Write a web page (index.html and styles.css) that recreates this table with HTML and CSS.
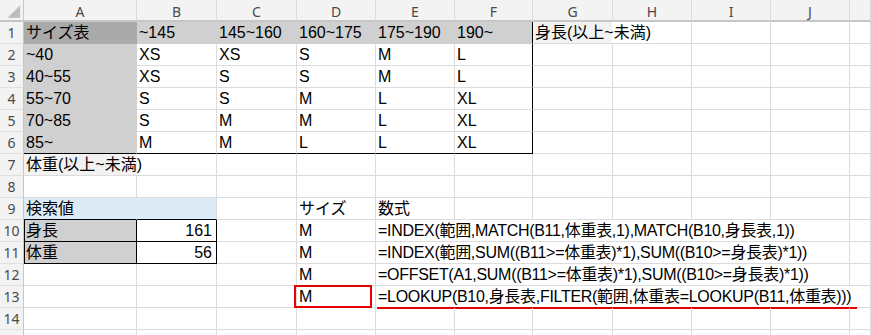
FILE: index.html
```html
<!DOCTYPE html>
<html lang="ja">
<head>
<meta charset="utf-8">
<title>サイズ表</title>
<link rel="stylesheet" href="styles.css">
</head>
<body>
<div class="sheet">
  <!-- header -->
  <div class="corner"><svg width="24" height="20" viewBox="0 0 24 20"><polygon points="21,5 21,18 8,18" fill="#bdbdbd"/></svg></div>
  <div class="ch">A</div><div class="ch">B</div><div class="ch">C</div><div class="ch">D</div><div class="ch">E</div><div class="ch">F</div><div class="ch">G</div><div class="ch">H</div><div class="ch">I</div><div class="ch">J</div><div class="ch"></div>

  <!-- row 1 -->
  <div class="rh">1</div>
  <div class="c fd">サイズ表</div>
  <div class="c f">~145</div>
  <div class="c f">145~160</div>
  <div class="c f">160~175</div>
  <div class="c f">175~190</div>
  <div class="c f rbk">190~</div>
  <div class="c s2 g1">身長(以上~未満)</div>
  <div class="c"></div><div class="c"></div><div class="c"></div>

  <!-- row 2 -->
  <div class="rh">2</div>
  <div class="c f">~40</div>
  <div class="c">XS</div><div class="c">XS</div><div class="c">S</div><div class="c">M</div><div class="c rbk">L</div>
  <div class="c"></div><div class="c"></div><div class="c"></div><div class="c"></div><div class="c"></div>

  <!-- row 3 -->
  <div class="rh">3</div>
  <div class="c f">40~55</div>
  <div class="c">XS</div><div class="c">S</div><div class="c">S</div><div class="c">M</div><div class="c rbk">L</div>
  <div class="c"></div><div class="c"></div><div class="c"></div><div class="c"></div><div class="c"></div>

  <!-- row 4 -->
  <div class="rh">4</div>
  <div class="c f">55~70</div>
  <div class="c">S</div><div class="c">S</div><div class="c">M</div><div class="c">L</div><div class="c rbk">XL</div>
  <div class="c"></div><div class="c"></div><div class="c"></div><div class="c"></div><div class="c"></div>

  <!-- row 5 -->
  <div class="rh">5</div>
  <div class="c f">70~85</div>
  <div class="c">S</div><div class="c">M</div><div class="c">M</div><div class="c">L</div><div class="c rbk">XL</div>
  <div class="c"></div><div class="c"></div><div class="c"></div><div class="c"></div><div class="c"></div>

  <!-- row 6 -->
  <div class="rh">6</div>
  <div class="c f bbk">85~</div>
  <div class="c bbk">M</div><div class="c bbk">M</div><div class="c bbk">L</div><div class="c bbk">L</div><div class="c bbk rbk">XL</div>
  <div class="c"></div><div class="c"></div><div class="c"></div><div class="c"></div><div class="c"></div>

  <!-- row 7 -->
  <div class="rh">7</div>
  <div class="c s2 a7">体重(以上~未満)</div>
  <div class="c"></div><div class="c"></div><div class="c"></div><div class="c"></div><div class="c"></div><div class="c"></div><div class="c"></div><div class="c"></div><div class="c"></div>

  <!-- row 8 -->
  <div class="rh">8</div>
  <div class="c"></div><div class="c"></div><div class="c"></div><div class="c"></div><div class="c"></div><div class="c"></div><div class="c"></div><div class="c"></div><div class="c"></div><div class="c"></div><div class="c"></div>

  <!-- row 9 -->
  <div class="rh">9</div>
  <div class="c blue">検索値</div>
  <div class="c blue b9"></div>
  <div class="c"></div>
  <div class="c">サイズ</div>
  <div class="c">数式</div>
  <div class="c"></div><div class="c"></div><div class="c"></div><div class="c"></div><div class="c"></div><div class="c"></div>

  <!-- row 10 -->
  <div class="rh">10</div>
  <div class="c f bx blk">身長</div>
  <div class="c bx num">161</div>
  <div class="c"></div>
  <div class="c">M</div>
  <div class="c s6 fx">=INDEX(範囲,MATCH(B11,体重表,1),MATCH(B10,身長表,1))</div>
  <div class="c"></div>

  <!-- row 11 -->
  <div class="rh">11</div>
  <div class="c f bx blk">体重</div>
  <div class="c bx num">56</div>
  <div class="c"></div>
  <div class="c">M</div>
  <div class="c s6 fx">=INDEX(範囲,SUM((B11&gt;=体重表)*1),SUM((B10&gt;=身長表)*1))</div>
  <div class="c"></div>

  <!-- row 12 -->
  <div class="rh">12</div>
  <div class="c"></div><div class="c"></div><div class="c"></div>
  <div class="c">M</div>
  <div class="c s6 fx">=OFFSET(A1,SUM((B11&gt;=体重表)*1),SUM((B10&gt;=身長表)*1))</div>
  <div class="c"></div>

  <!-- row 13 -->
  <div class="rh">13</div>
  <div class="c"></div><div class="c"></div><div class="c"></div>
  <div class="c mark">M</div>
  <div class="c s7 fx ul">=LOOKUP(B10,身長表,FILTER(範囲,体重表=LOOKUP(B11,体重表)))</div>

  <!-- row 14 -->
  <div class="rh">14</div>
  <div class="c"></div><div class="c"></div><div class="c"></div><div class="c"></div><div class="c"></div><div class="c"></div><div class="c"></div><div class="c"></div><div class="c"></div><div class="c"></div><div class="c"></div>

  <!-- row 15 (only its top edge is visible) -->
  <div class="rh"></div>
  <div class="c"></div><div class="c"></div><div class="c"></div><div class="c"></div><div class="c"></div><div class="c"></div><div class="c"></div><div class="c"></div><div class="c"></div><div class="c"></div><div class="c"></div>
</div>
</body>
</html>
```

FILE: styles.css
```css
html, body {
  margin: 0;
  padding: 0;
  background: #ffffff;
}

body {
  width: 871px;
  height: 335px;
  overflow: hidden;
}

.sheet {
  display: grid;
  grid-template-columns: 24px 113px 80px 80px 79px 79px 78px 80px 79px 79px 79px 1fr;
  grid-template-rows: 22px repeat(15, 22px);
  width: 871px;
  height: 335px;
  overflow: hidden;
  background: #ffffff;
  font-family: "Liberation Sans", "Noto Sans CJK JP", sans-serif;
  font-size: 16px;
  color: #000;
}

.sheet > div {
  box-sizing: border-box;
  min-width: 0;
}

/* header */
.corner {
  background: #f3f3f3;
  border-right: 1px solid #c6c6c6;
  border-bottom: 2px solid #c6c6c6;
  display: flex;
}

.ch {
  background: #f3f3f3;
  border-right: 1px solid #dadada;
  border-bottom: 2px solid #c6c6c6;
  display: flex;
  align-items: center;
  justify-content: center;
  padding-top: 3px;
  font-family: "Noto Sans", "Liberation Sans", sans-serif;
  font-size: 14px;
  color: #4a4a4a;
}

.rh {
  background: #f3f3f3;
  border-right: 1px solid #c6c6c6;
  border-bottom: 1px solid #e0e0e0;
  display: flex;
  align-items: center;
  justify-content: center;
  font-family: "Noto Sans", "Liberation Sans", sans-serif;
  font-size: 14px;
  color: #4a4a4a;
}

/* cells */
.c {
  border-right: 1px solid #dcdcdc;
  border-bottom: 1px solid #dcdcdc;
  display: flex;
  align-items: center;
  padding: 0 3px 0 2px;
  line-height: 21px;
  white-space: nowrap;
  overflow: visible;
  position: relative;
}

.s2 { grid-column: span 2; }
.s6 { grid-column: span 6; }
.s7 { grid-column: span 7; }

.fx { letter-spacing: -0.3px; }

.fd {
  background: #aaaaaa;
  border-right-color: #aaaaaa;
  border-bottom-color: #aaaaaa;
}

.f {
  background: #d0d0d0;
  border-right-color: #d0d0d0;
  border-bottom-color: #d0d0d0;
}

.rbk { border-right-color: #000; }
.bbk { border-bottom-color: #000; }

.g1 {
  background: linear-gradient(to right, #f2f2f2 0, #f2f2f2 79px, transparent 79px);
}

.a7 {
  background: linear-gradient(to right, #f2f2f2 0, #f2f2f2 113px, transparent 113px);
}

.blue {
  background: #ddebf7;
  border-right-color: #ddebf7;
  border-bottom-color: #000;
}

.b9 { border-right-color: #dcdcdc; }

.bx {
  border-right-color: #000;
  border-bottom-color: #000;
}

.blk { border-left: 1px solid #000; padding-left: 1px; }

.num { justify-content: flex-end; padding-right: 4px; }

/* annotations */
.mark::after {
  content: "";
  position: absolute;
  left: -3px;
  top: -1px;
  width: 78px;
  height: 23px;
  box-sizing: border-box;
  border: 2px solid #e60000;
}

.ul::after {
  content: "";
  position: absolute;
  left: 1px;
  width: 480px;
  bottom: -2px;
  height: 2px;
  background: #e60000;
}
```
